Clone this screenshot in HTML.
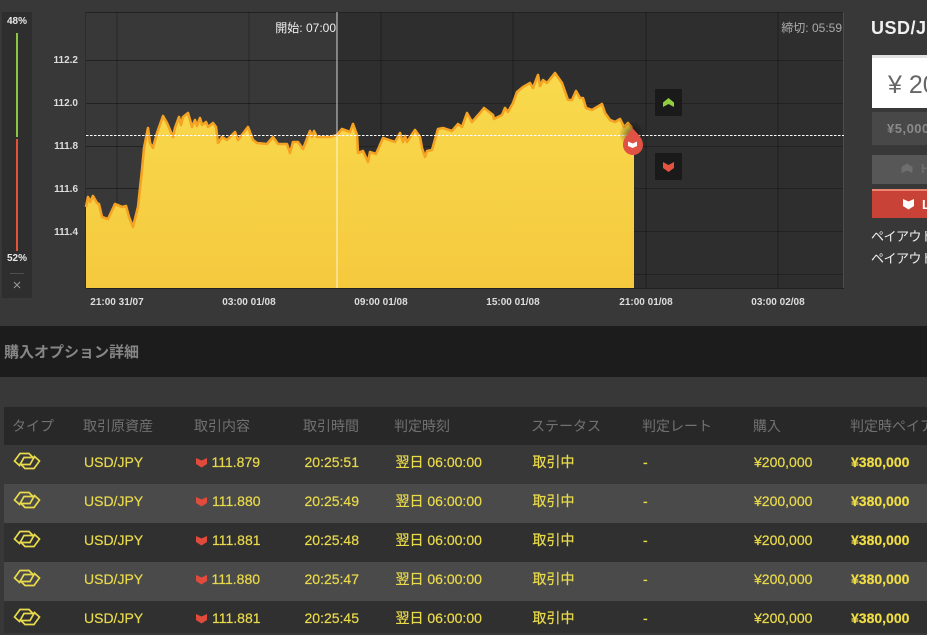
<!DOCTYPE html>
<html lang="ja"><head><meta charset="utf-8"><title>USD/JPY</title>
<style>
html,body{margin:0;padding:0;width:927px;height:633px;overflow:hidden;background:#383838;font-family:"Liberation Sans","Noto Sans CJK JP",sans-serif}
.a{position:absolute;white-space:nowrap}
svg{position:absolute;left:0;top:0}
.yl{position:absolute;width:60px;left:18px;text-align:right;font:bold 10px/12px "Liberation Sans",sans-serif;color:#ddd}
.xl{position:absolute;width:90px;text-align:center;top:297px;font:bold 10px/12px "Liberation Sans",sans-serif;color:#ddd}
.th{position:absolute;left:4px;top:407px;width:923px;height:38px;background:#282828}
.th span{position:absolute;top:0;line-height:38px;font-size:14px;color:#717171;white-space:nowrap}
.r{position:absolute;left:4px;width:923px;height:39px;color:#e9da4b;font-size:14px;line-height:34px;-webkit-text-stroke:.2px #e9da4b}
.r span{position:absolute;top:0;white-space:nowrap}
.c1{left:80px}.c3{left:300.5px}.c4{left:391.5px}.c5{left:528.5px}.c6{left:639px}.c7{left:750px}
.c8{left:847px;font-weight:bold;color:#f0dd42}
.c2{left:207.5px}
</style></head><body>

<svg width="927" height="633" viewBox="0 0 927 633">
<defs>
<linearGradient id="g" x1="0" y1="70" x2="0" y2="288" gradientUnits="userSpaceOnUse"><stop offset="0" stop-color="#f9da4d"/><stop offset="1" stop-color="#f5c93e"/></linearGradient>
<radialGradient id="sh"><stop offset="0" stop-color="#000" stop-opacity=".55"/><stop offset="1" stop-color="#000" stop-opacity="0"/></radialGradient>
</defs>
<rect x="86" y="12" width="251" height="276" fill="#383838"/>
<rect x="337" y="12" width="507" height="276" fill="#2e2e2e"/>
<path d="M86 12.500H844M86 60.500H844M86 103.500H844M86 146.500H844M86 188.500H844M86 231.500H844M86 274.500H844M86 288.500H844" stroke="#222" stroke-width="1"/>
<path d="M117 12V288M249 12V288M381 12V288M513 12V288M646 12V288M778 12V288" stroke="#000" stroke-opacity=".14" stroke-width="2"/>
<path d="M843.500 12V288" stroke="#4c4c4c"/>
<path d="M85.500 12V288" stroke="#2c2c2c"/>
<path fill="url(#g)" d="M86 288L86 207L88 197L90 202L93 196L97 203L99 204L102 217L108 219L115 204L122 207L126 206L129 217L133 227L138 207L142 170L144 148L148 128L150 143L153 148L157 133L163 116L167 123L173 137L175 128L179 117L181 125L183 117L188 113L192 127L195 120L197 126L200 118L202 125L206 122L208 127L213 123L216 127L218 143L222 137L227 140L235 132L238 140L248 127L253 140L257 143L267 144L273 137L278 144L287 144L290 153L293 142L298 142L303 149L310 131L312 137L314 131L317 137L330 137L337 135L342 129L350 132L353 124L357 135L358 153L363 151L368 162L370 152L376 154L383 138L395 142L400 133L403 142L405 136L407 142L415 130L420 137L422 148L425 157L427 151L432 150L438 129L443 128L452 131L458 124L462 127L467 113L472 122L480 113L484 108L493 115L494 119L502 115L505 108L508 112L513 103L517 92L523 87L530 83L533 88L538 75L540 86L543 80L547 83L555 73L562 83L568 100L572 100L576 91L580 98L583 98L586 108L592 110L602 104L605 113L610 120L615 122L620 119L624 127L628 123L632 128L634 130L634 288Z"/>
<path fill="none" stroke="#f5a322" stroke-width="2.600" stroke-linejoin="round" d="M86 207L88 197L90 202L93 196L97 203L99 204L102 217L108 219L115 204L122 207L126 206L129 217L133 227L138 207L142 170L144 148L148 128L150 143L153 148L157 133L163 116L167 123L173 137L175 128L179 117L181 125L183 117L188 113L192 127L195 120L197 126L200 118L202 125L206 122L208 127L213 123L216 127L218 143L222 137L227 140L235 132L238 140L248 127L253 140L257 143L267 144L273 137L278 144L287 144L290 153L293 142L298 142L303 149L310 131L312 137L314 131L317 137L330 137L337 135L342 129L350 132L353 124L357 135L358 153L363 151L368 162L370 152L376 154L383 138L395 142L400 133L403 142L405 136L407 142L415 130L420 137L422 148L425 157L427 151L432 150L438 129L443 128L452 131L458 124L462 127L467 113L472 122L480 113L484 108L493 115L494 119L502 115L505 108L508 112L513 103L517 92L523 87L530 83L533 88L538 75L540 86L543 80L547 83L555 73L562 83L568 100L572 100L576 91L580 98L583 98L586 108L592 110L602 104L605 113L610 120L615 122L620 119L624 127L628 123L632 128"/>
<rect x="336" y="12" width="2" height="276" fill="#fff" fill-opacity=".4"/>
<path d="M86 135.500H844" stroke="#fff" stroke-width="1" stroke-dasharray="2.500 1.500"/>
<circle cx="632" cy="134" r="13" fill="url(#sh)"/>
<path d="M632.700 128C636 133 643 137 643 145A10 10 0 0 1 623 145C623 137 630 133 632.700 128Z" fill="#e05244"/>
<path d="M628 141.500L632.700 143.500L637 141.500V146L632.700 148L628 146Z" fill="#fff"/>
<rect x="655" y="89" width="27" height="27" fill="#1a1a1a"/>
<path d="M663 102.500L668.500 98L674 102.500V107L668.500 104L663 107Z" fill="#8fce3c"/>
<rect x="655" y="153" width="27" height="27" fill="#1a1a1a"/>
<path d="M663 162L668.500 165L674 162V168L668.500 172L663 168Z" fill="#e45240"/>
<rect x="2" y="12" width="30" height="286" fill="#2e2e2e"/>
<rect x="16" y="33" width="2" height="104" fill="#8cc63f"/>
<rect x="16" y="139" width="2" height="112" fill="#e2543a"/>
<rect x="10" y="273" width="14" height="1" fill="#4e4e4e"/>
<path d="M14 282L20 288M20 282L14 288" stroke="#999" stroke-width="1"/>
<rect x="0" y="326" width="927" height="51" fill="#1c1c1c"/>
</svg>

<div class="a" style="left:2px;width:30px;top:16px;text-align:center;font:bold 10px/12px 'Liberation Sans',sans-serif;color:#e8e8e8">48%</div>
<div class="a" style="left:2px;width:30px;top:253px;text-align:center;font:bold 10px/12px 'Liberation Sans',sans-serif;color:#e8e8e8">52%</div>

<div class="yl" style="top:55px">112.2</div>
<div class="yl" style="top:98px">112.0</div>
<div class="yl" style="top:141px">111.8</div>
<div class="yl" style="top:184px">111.6</div>
<div class="yl" style="top:227px">111.4</div>

<div class="xl" style="left:72px">21:00 31/07</div>
<div class="xl" style="left:204px">03:00 01/08</div>
<div class="xl" style="left:336px">09:00 01/08</div>
<div class="xl" style="left:468px">15:00 01/08</div>
<div class="xl" style="left:601px">21:00 01/08</div>
<div class="xl" style="left:733px">03:00 02/08</div>

<div class="a" style="right:591px;top:20px;font-size:12px;line-height:16px;color:#eee">開始: 07:00</div>
<div class="a" style="right:85px;top:20px;font-size:12px;line-height:16px;color:#aaa">締切: 05:59</div>

<div class="a" style="left:871px;top:17px;width:55px;overflow:hidden;font:bold 18px/22px 'Liberation Sans',sans-serif;letter-spacing:.5px;color:#f0f0f0">USD/JPY</div>
<div class="a" style="left:872px;top:55px;width:55px;height:50px;background:#fff;border-top:3px solid #e2e2e2;overflow:hidden;font-size:25px;line-height:54px;color:#666;text-indent:16px">¥ 200,000</div>
<div class="a" style="left:872px;top:112px;width:55px;height:33px;background:#484848;overflow:hidden;font:bold 13px/33px 'Liberation Sans',sans-serif;letter-spacing:.5px;color:#8a8a8a;text-indent:15px">¥5,000</div>
<div class="a" style="left:872px;top:155px;width:55px;height:29px;background:#575757;overflow:hidden;font:bold 13px/28px 'Liberation Sans',sans-serif;color:#6c6c6c;text-indent:49px">H</div>
<svg width="927" height="633" viewBox="0 0 927 633"><path d="M901.500 167L907 163.500L912.500 167V173L907 170.500L901.500 173Z" fill="#6e6e6e"/></svg>
<div class="a" style="left:872px;top:189px;width:55px;height:27px;background:#c94237;border-top:2px solid #ea8672;overflow:hidden;font:bold 13px/28px 'Liberation Sans',sans-serif;color:#fff;text-indent:50px">L</div>
<svg width="927" height="633" viewBox="0 0 927 633"><path d="M903 199L908.500 201.500L914 199V206L908.500 209.500L903 206Z" fill="#fff"/></svg>
<div class="a" style="left:871px;top:228px;font-size:13px;line-height:18px;letter-spacing:-.5px;color:#eee">ペイアウト</div>
<div class="a" style="left:871px;top:250px;font-size:13px;line-height:18px;letter-spacing:-.5px;color:#eee">ペイアウト</div>

<div class="a" style="left:4px;top:343px;font-size:15px;line-height:20px;font-weight:bold;color:#868686">購入オプション詳細</div>

<div class="th">
<span style="left:8px">タイプ</span><span style="left:79px">取引原資産</span><span style="left:190px">取引内容</span><span style="left:299px">取引時間</span><span style="left:390px">判定時刻</span><span style="left:527px">ステータス</span><span style="left:638px">判定レート</span><span style="left:749px">購入</span><span style="left:846px">判定時ペイアウト</span>
</div>

<div class="r" style="top:445px;background:#383838"><span class="c1">USD/JPY</span><span class="c2">111.879</span><span class="c3">20:25:51</span><span class="c4">翌日 06:00:00</span><span class="c5">取引中</span><span class="c6">-</span><span class="c7">¥200,000</span><span class="c8">¥380,000</span></div>
<div class="r" style="top:484px;background:#4a4a4a"><span class="c1">USD/JPY</span><span class="c2" style="left:208px">111.880</span><span class="c3">20:25:49</span><span class="c4">翌日 06:00:00</span><span class="c5">取引中</span><span class="c6">-</span><span class="c7">¥200,000</span><span class="c8">¥380,000</span></div>
<div class="r" style="top:523px;background:#303030"><span class="c1">USD/JPY</span><span class="c2" style="left:208px">111.881</span><span class="c3">20:25:48</span><span class="c4">翌日 06:00:00</span><span class="c5">取引中</span><span class="c6">-</span><span class="c7">¥200,000</span><span class="c8">¥380,000</span></div>
<div class="r" style="top:562px;background:#4a4a4a"><span class="c1">USD/JPY</span><span class="c2">111.880</span><span class="c3">20:25:47</span><span class="c4">翌日 06:00:00</span><span class="c5">取引中</span><span class="c6">-</span><span class="c7">¥200,000</span><span class="c8">¥380,000</span></div>
<div class="r" style="top:601px;background:#303030;height:32px"><span class="c1">USD/JPY</span><span class="c2" style="left:208px">111.881</span><span class="c3">20:25:45</span><span class="c4">翌日 06:00:00</span><span class="c5">取引中</span><span class="c6">-</span><span class="c7">¥200,000</span><span class="c8">¥380,000</span></div>

<svg width="927" height="633" viewBox="0 0 927 633">
<defs>
<g id="tp" fill="none" stroke="#e9da4b" stroke-width="1.700" stroke-linejoin="miter">
<path d="M14.500 461L20 453.500H29L33 457.500H24L19.500 465.500Z"/>
<path d="M39.500 461L34 468.500H25L21 464.500H30L34.500 456.500Z"/>
</g>
<path id="dn" d="M0 0L5.500 2.500L11 0V6L5.500 9.500L0 6Z" fill="#e04b3c"/>
</defs>
<use href="#tp" x="0" y="0"/><use href="#tp" x="0" y="39"/><use href="#tp" x="0" y="78"/><use href="#tp" x="0" y="117"/><use href="#tp" x="0" y="156"/>
<use href="#dn" x="196" y="458"/><use href="#dn" x="196" y="497"/><use href="#dn" x="196" y="536"/><use href="#dn" x="196" y="575"/><use href="#dn" x="196" y="614"/>
</svg>
</body></html>
